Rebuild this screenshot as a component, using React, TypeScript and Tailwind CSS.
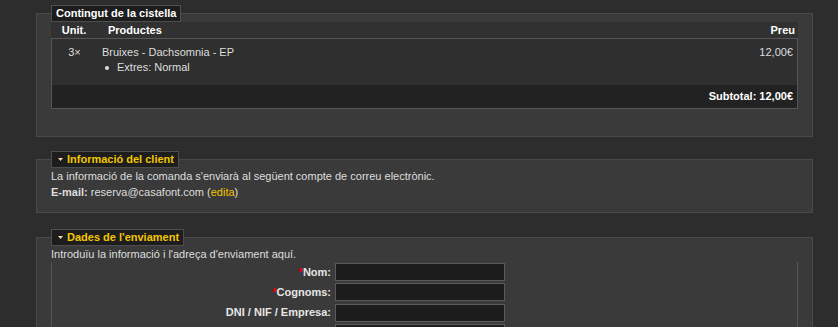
import React from "react";

const font = "font-['Liberation_Sans','Arial',sans-serif]";

function Arrow() {
  return (
    <svg width="5" height="3" viewBox="0 0 5 3" className="mr-[4px] ml-[2px] inline-block align-middle">
      <polygon points="0,0 5,0 2.5,3" fill="#f1dcaa" />
    </svg>
  );
}

function Box({
  title,
  toggle,
  className,
  children,
}: {
  title: string;
  toggle?: boolean;
  className?: string;
  children: React.ReactNode;
}) {
  return (
    <fieldset className={`border border-[#4a4a4a] bg-[#3a3a3a] px-[14px] ${className ?? ""}`}>
      <legend
        className={`flex h-[17px] items-center border border-[#4e4e4e] bg-[#1d1d1d] px-[4px] font-bold ${
          toggle ? "text-[#f3c600]" : "text-white"
        }`}
      >
        {toggle && <Arrow />}
        {title}
      </legend>
      {children}
    </fieldset>
  );
}

const fields = [
  { label: "Nom:", required: true },
  { label: "Cognoms:", required: true },
  { label: "DNI / NIF / Empresa:", required: false },
  { label: "", required: false },
];

export default function App() {
  return (
    <div className={`h-[327px] w-[838px] overflow-hidden bg-[#2d2d2d] pl-[36px] pt-[5px] text-[11px] text-[#dedede] ${font}`}>
      <div className="flex w-[777px] flex-col">
        {/* Cistella */}
        <Box title="Contingut de la cistella" className="pb-[27px]">
          <div className="flex h-[16px] items-center bg-[#313131] font-bold text-white">
            <div className="w-[46px] text-center">Unit.</div>
            <div className="flex-1 pl-[11px]">Productes</div>
            <div className="pr-[3px] text-right">Preu</div>
          </div>
          <div className="border border-[#555]">
            <div className="flex h-[46px] bg-[#2f2f2f] pt-[6px] leading-[15px]">
              <div className="w-[45px] text-center">3×</div>
              <div className="flex-1 pl-[5px]">
                <div>Bruixes - Dachsomnia - EP</div>
                <ul className="pl-[3px]">
                  <li className="flex items-center gap-[8px]">
                    <span className="inline-block h-[4px] w-[4px] rounded-full bg-[#dedede]" />
                    Extres: Normal
                  </li>
                </ul>
              </div>
              <div className="pr-[4px] text-right">12,00€</div>
            </div>
            <div className="flex h-[23px] items-center justify-end bg-[#222] pr-[4px] font-bold text-white">
              Subtotal: 12,00€
            </div>
          </div>
        </Box>

        {/* Client */}
        <Box title="Informació del client" toggle className="mt-[14px] pb-[12px]">
          <div className="leading-[16px]">
            <p>La informació de la comanda s'enviarà al següent compte de correu electrònic.</p>
            <p>
              <span className="font-bold">E-mail:</span> reserva@casafont.com (
              <span className="text-[#f3c600]">edita</span>)
            </p>
          </div>
        </Box>

        {/* Enviament */}
        <Box title="Dades de l'enviament" toggle className="mt-[16px] pb-[20px]">
          <p className="leading-[16px]">Introduïu la informació i l'adreça d'enviament aquí.</p>
          <div className="flex flex-col border-x border-[#555] pt-[1px]">
            {fields.map((f, i) => (
              <div key={i} className="flex h-[20.33px] items-start">
                <label className="flex h-[18px] w-[281px] items-center justify-end pr-[2px] font-bold text-[#e6e6e6]">
                  {f.required && <span className="text-[#e00]">*</span>}
                  {f.label}
                </label>
                <input
                  type="text"
                  className="ml-[2px] h-[18px] w-[170px] border border-[#5a5a5a] bg-[#1c1c1c] text-[11px] text-white outline-none"
                />
              </div>
            ))}
          </div>
        </Box>
      </div>
    </div>
  );
}
